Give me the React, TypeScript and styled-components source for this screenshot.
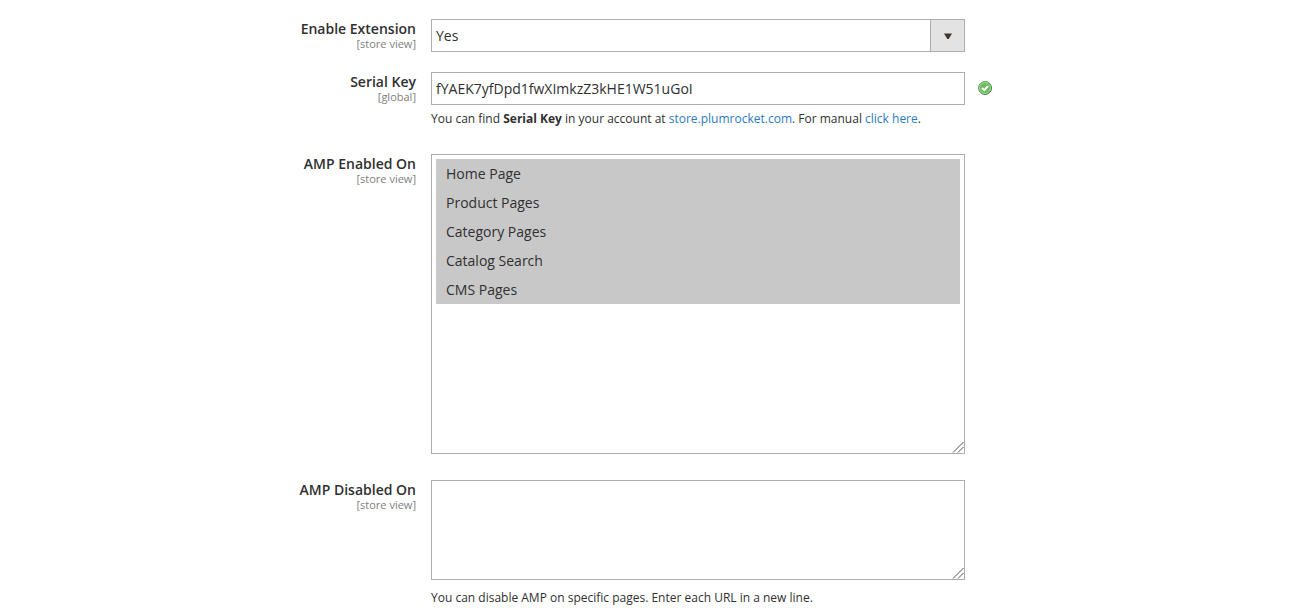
import React from "react";
import styled, { createGlobalStyle, css } from "styled-components";

const GlobalStyle = createGlobalStyle`
  *, *::before, *::after { box-sizing: border-box; }
  body {
    margin: 0;
    background: #fff;
    color: #303030;
    font-family: "Open Sans", "Helvetica Neue", Helvetica, Arial, sans-serif;
    font-size: 14px;
  }
`;

const Form = styled.form`
  padding-top: 19px;
`;

const Row = styled.div<{ $gap: number }>`
  display: grid;
  grid-template-columns: minmax(0, 418fr) minmax(0, 534fr) minmax(0, 318fr);
  column-gap: 13px;
  margin-bottom: ${(p) => p.$gap}px;
`;

const Label = styled.label`
  display: flex;
  flex-direction: column;
  align-self: start;
  align-items: flex-end;
  padding-right: 2px;
  text-align: right;
`;

const LabelText = styled.span`
  font-weight: 600;
  line-height: 19px;
`;

const Scope = styled.span`
  color: #808080;
  font-size: 11px;
  line-height: 12px;
`;

const Value = styled.div`
  display: flex;
  flex-direction: column;
  min-width: 0;
`;

const control = css`
  display: block;
  width: 100%;
  margin: 0;
  border: 1px solid #adadad;
  border-radius: 0;
  background: #fff;
  color: #303030;
  font: inherit;
  outline: none;
  &:focus {
    border-color: #007bdb;
  }
`;

const resizable = css`
  resize: both;
  &::-webkit-resizer {
    background: no-repeat right bottom / 15px 15px
      url("data:image/svg+xml,%3Csvg xmlns='http://www.w3.org/2000/svg' width='15' height='15' viewBox='0 0 15 15'%3E%3Cpath d='M4 14.5 14.5 4M9 14.5 14.5 9' fill='none' stroke='%23555'/%3E%3C/svg%3E");
  }
`;

const SelectBox = styled.div`
  position: relative;
`;

const Select = styled.select`
  ${control}
  appearance: none;
  height: 33px;
  padding: 0 40px 0 4px;
`;

const Arrow = styled.span`
  position: absolute;
  top: 0;
  right: 0;
  bottom: 0;
  display: flex;
  align-items: center;
  justify-content: center;
  width: 35px;
  border: 1px solid #adadad;
  background: #e3e3e3;
  pointer-events: none;
`;

const TextInput = styled.input`
  ${control}
  height: 33px;
  padding: 0 4px;
`;

const MultiSelect = styled.select`
  ${control}
  ${resizable}
  height: 300px;
  padding: 4px;
  overflow: auto;
`;

const Option = styled.option`
  min-height: 29px;
  padding: 5px 10px;
  line-height: 19px;
  color: #303030;
  &:checked {
    background: #c8c8c8 linear-gradient(#c8c8c8, #c8c8c8);
    -webkit-text-fill-color: #303030;
  }
`;

const TextArea = styled.textarea`
  ${control}
  ${resizable}
  height: 100px;
  padding: 5px;
  margin-bottom: 4px;
`;

const Note = styled.p`
  margin: 6px 0 0;
  font-size: 12px;
  line-height: 16px;
`;

const Link = styled.a`
  color: #2b7bbf;
  text-decoration: none;
  &:hover {
    text-decoration: underline;
  }
`;

const Status = styled.div`
  display: flex;
  align-items: center;
  height: 31px;
`;

function FieldLabel({ id, text, scope }: { id: string; text: string; scope: string }) {
  return (
    <Label htmlFor={id}>
      <LabelText>{text}</LabelText>
      <Scope>[{scope}]</Scope>
    </Label>
  );
}

function ValidIcon() {
  return (
    <svg width="16" height="16" viewBox="0 0 16 16" role="img" aria-label="Valid">
      <defs>
        <linearGradient id="valid-rim" x1="0" y1="0" x2="1" y2="1">
          <stop offset="0" stopColor="#6fb568" />
          <stop offset="1" stopColor="#2f6f33" />
        </linearGradient>
      </defs>
      <circle cx="7" cy="8" r="6.5" fill="#6ebb62" stroke="url(#valid-rim)" />
      <circle cx="7" cy="8" r="5.5" fill="none" stroke="#9fd694" />
      <path d="M4 8 6.4 10.2 10 6.2" fill="none" stroke="#fff" strokeWidth="2" />
    </svg>
  );
}

const pages = ["Home Page", "Product Pages", "Category Pages", "Catalog Search", "CMS Pages"];

export default function App() {
  return (
    <>
      <GlobalStyle />
      <Form>
        <Row $gap={20}>
          <FieldLabel id="enabled" text="Enable Extension" scope="store view" />
          <SelectBox>
            <Select id="enabled" defaultValue="Yes">
              <option>Yes</option>
              <option>No</option>
            </Select>
            <Arrow>
              <svg width="8" height="6" viewBox="0 0 8 6" aria-hidden="true">
                <path d="M0 0.5h8L4.7 6H3.3z" fill="#41362f" />
              </svg>
            </Arrow>
          </SelectBox>
        </Row>

        <Row $gap={27}>
          <FieldLabel id="serial" text="Serial Key" scope="global" />
          <Value>
            <TextInput
              id="serial"
              type="text"
              spellCheck={false}
              defaultValue="fYAEK7yfDpd1fwXImkzZ3kHE1W51uGoI"
            />
            <Note>
              You can find <strong>Serial Key</strong> in your account at{" "}
              <Link href="#store">store.plumrocket.com</Link>. For manual{" "}
              <Link href="#manual">click here</Link>.
            </Note>
          </Value>
          <Status>
            <ValidIcon />
          </Status>
        </Row>

        <Row $gap={26}>
          <FieldLabel id="amp-on" text="AMP Enabled On" scope="store view" />
          <MultiSelect id="amp-on" multiple defaultValue={pages}>
            {pages.map((page) => (
              <Option key={page} value={page}>
                {page}
              </Option>
            ))}
          </MultiSelect>
        </Row>

        <Row $gap={0}>
          <FieldLabel id="amp-off" text="AMP Disabled On" scope="store view" />
          <Value>
            <TextArea id="amp-off" />
            <Note>You can disable AMP on specific pages. Enter each URL in a new line.</Note>
          </Value>
        </Row>
      </Form>
    </>
  );
}
